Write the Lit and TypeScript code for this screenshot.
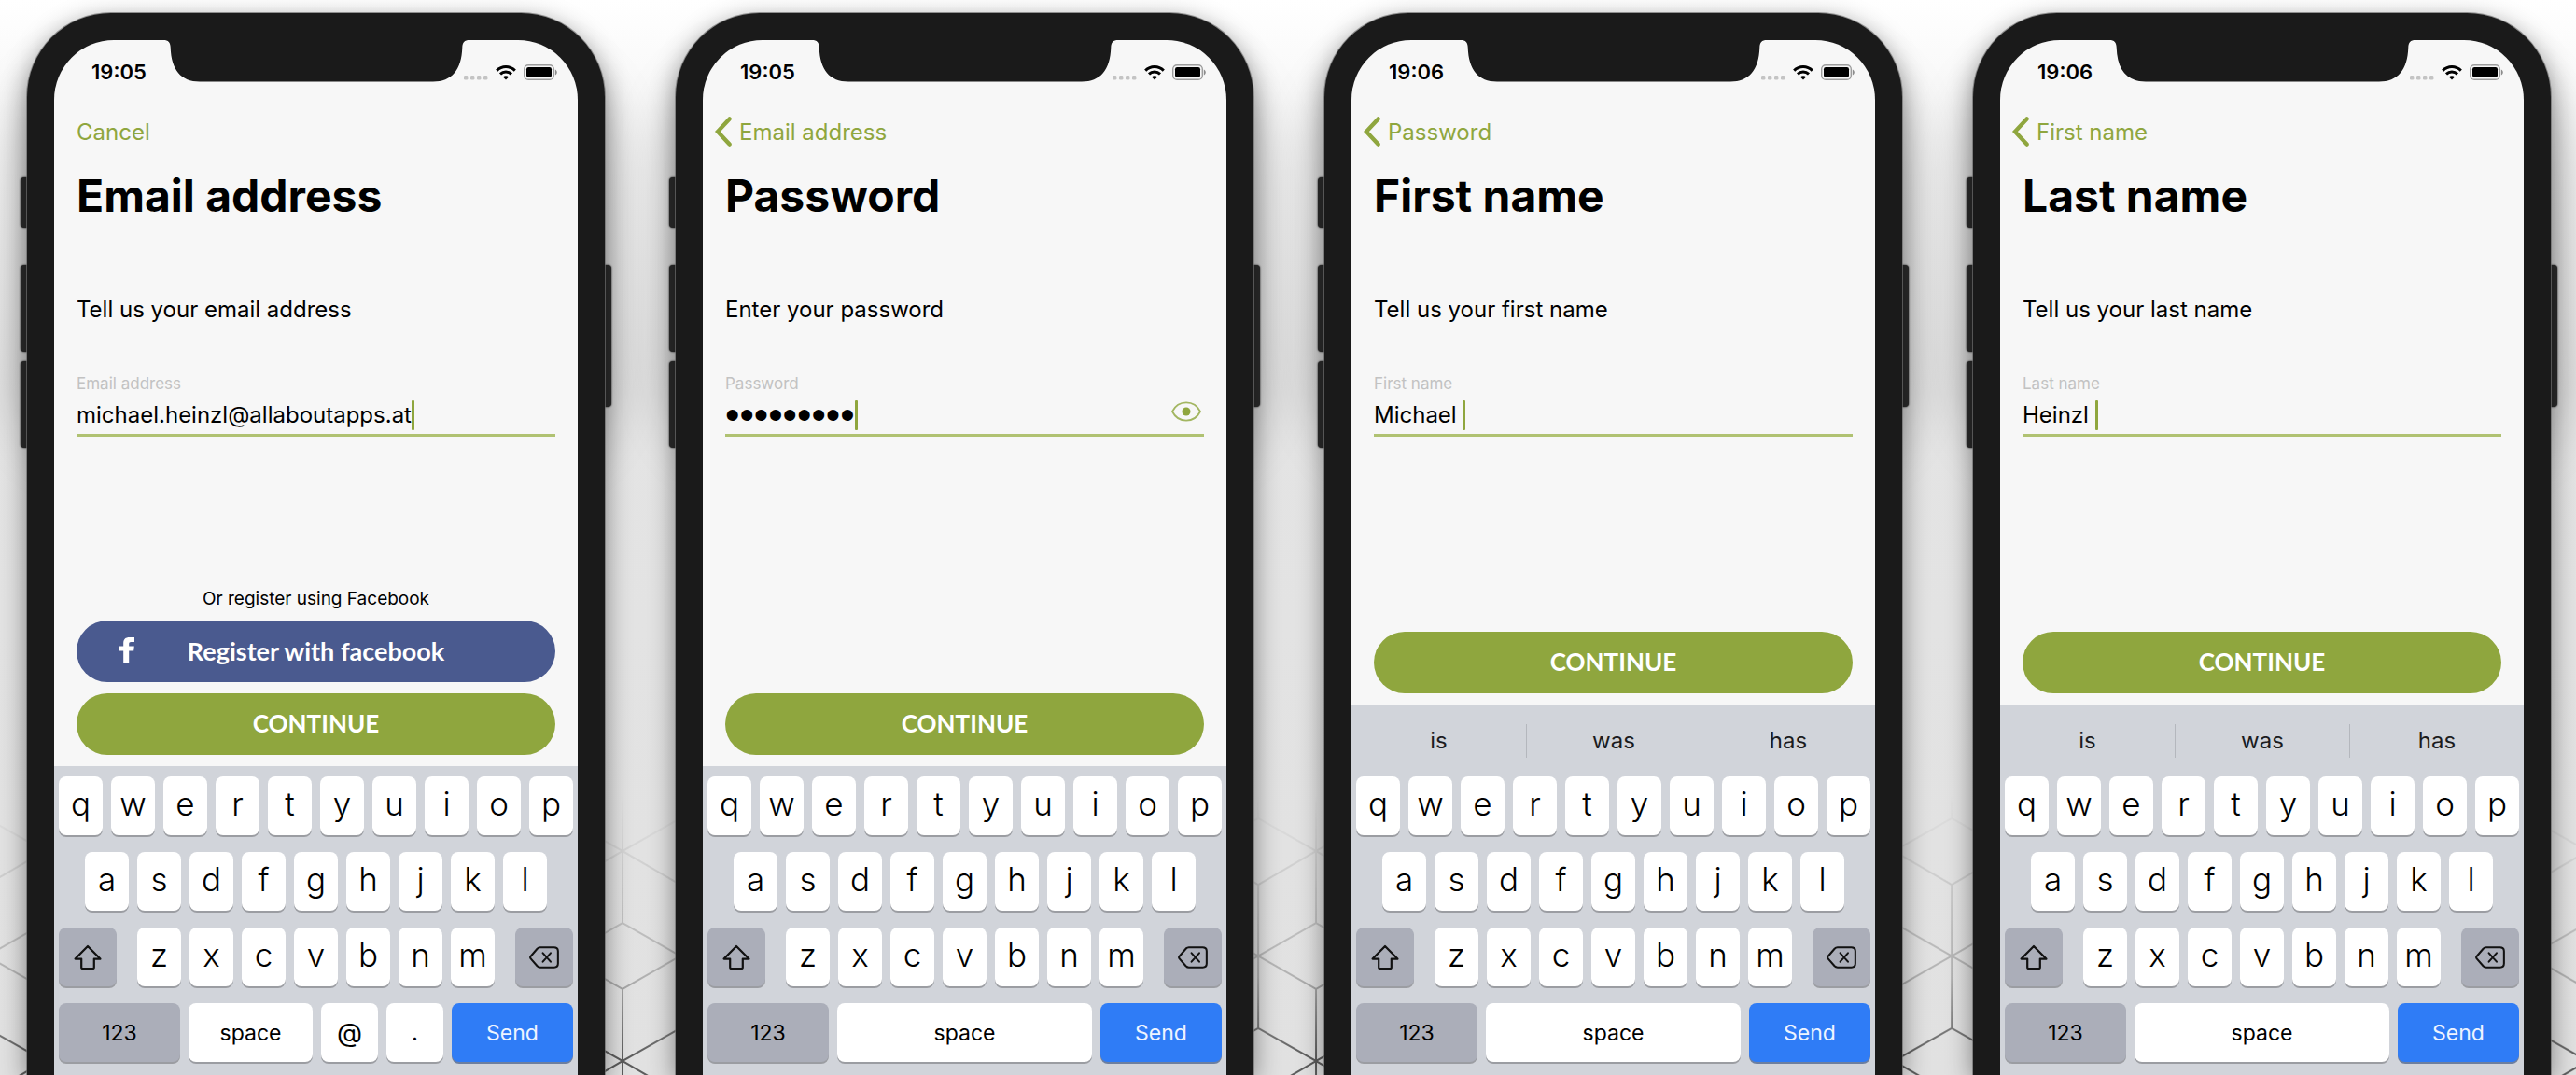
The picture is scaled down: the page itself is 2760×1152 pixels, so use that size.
import { LitElement, html, svg, css, nothing } from "lit";
import { customElement, property } from "lit/decorators.js";

interface Step {
  id: string;
  time: string;
  back: string;
  root?: boolean;
  title: string;
  prompt: string;
  label: string;
  type: string;
  value: string;
  facebook?: boolean;
  suggestions?: string[];
  extraKeys?: string[];
}

const steps: Step[] = [
  {
    id: "email",
    time: "19:05",
    back: "Cancel",
    root: true,
    title: "Email address",
    prompt: "Tell us your email address",
    label: "Email address",
    type: "text",
    value: "michael.heinzl@allaboutapps.at",
    facebook: true,
    extraKeys: ["@", "."],
  },
  {
    id: "password",
    time: "19:05",
    back: "Email address",
    title: "Password",
    prompt: "Enter your password",
    label: "Password",
    type: "password",
    value: "password1",
  },
  {
    id: "first-name",
    time: "19:06",
    back: "Password",
    title: "First name",
    prompt: "Tell us your first name",
    label: "First name",
    type: "text",
    value: "Michael ",
    suggestions: ["is", "was", "has"],
  },
  {
    id: "last-name",
    time: "19:06",
    back: "First name",
    title: "Last name",
    prompt: "Tell us your last name",
    label: "Last name",
    type: "text",
    value: "Heinzl ",
    suggestions: ["is", "was", "has"],
  },
];

const wifiIcon = html`<svg width="22" height="17" viewBox="0 0 22 17" aria-hidden="true">
  <g fill="none" stroke="#000" stroke-width="3">
    <path d="M1.2 6.6C6.8 1 15.2 1 20.8 6.6" />
    <path d="M5 10.4C8.4 7.1 13.6 7.1 17 10.4" />
  </g>
  <path d="M11 16.6 7.9 13.4C9.6 11.9 12.4 11.9 14.1 13.4Z" />
</svg>`;

const batteryIcon = html`<svg width="36" height="17" viewBox="0 0 36 17" aria-hidden="true">
  <rect x=".7" y=".7" width="31.6" height="15.6" rx="4.4" fill="none" stroke="#9c9c9c" stroke-width="1.4" />
  <rect x="3" y="3" width="27" height="11" rx="2.2" />
  <path d="M33.8 5.6C36.4 6.6 36.4 10.4 33.8 11.4Z" fill="#8c8c8c" />
</svg>`;

const signalIcon = html`<svg width="26" height="17" viewBox="0 0 26 17" aria-hidden="true">
  <g fill="#c4c4c4">
    <rect x="0" y="12" width="4.4" height="4.6" rx="1.4" />
    <rect x="7" y="12" width="4.4" height="4.6" rx="1.4" />
    <rect x="14" y="12" width="4.4" height="4.6" rx="1.4" />
    <rect x="21" y="12" width="4.4" height="4.6" rx="1.4" />
  </g>
</svg>`;

const chevronIcon = html`<svg width="18" height="32" viewBox="0 0 18 32" aria-hidden="true">
  <path d="M15.6 2.4 2.9 16 15.6 29.6" fill="none" stroke="#8fa63e" stroke-width="4.4" stroke-linecap="round" />
</svg>`;

const eyeIcon = html`<svg width="32" height="22" viewBox="0 0 32 22" aria-hidden="true">
  <path d="M1 11C4 5 9.5 1.4 16 1.4S28 5 31 11C28 17 22.500 20.6 16 20.6S4 17 1 11Z" fill="none" stroke="#a3b661" stroke-width="1.8" />
  <circle cx="16" cy="11" r="4.5" fill="#8fa63e" />
</svg>`;

const facebookIcon = html`<svg width="16" height="28" viewBox="0 0 16 28" aria-hidden="true">
  <path d="M4.200 28V14.600H0V9.500H4.200V6.300C4.200 2 6.600 0 10.600 0H16V5H12.400C10.700 5 10.200 5.700 10.200 7.100V9.500H15.800L15.200 14.600H10.200V28Z" fill="#fff" />
</svg>`;

const shiftIcon = html`<svg width="30" height="28" viewBox="0 0 30 28" aria-hidden="true">
  <path d="M15 2 28.400 15.600H21.800V24.400C21.800 25.400 21.200 26 20.200 26H9.800C8.800 26 8.200 25.400 8.200 24.400V15.600H1.600Z" fill="none" stroke="#111" stroke-width="2.200" stroke-linejoin="round" />
</svg>`;

const deleteIcon = html`<svg width="34" height="26" viewBox="0 0 36 28" aria-hidden="true">
  <g fill="none" stroke="#111" stroke-width="2.200" stroke-linejoin="round" stroke-linecap="round">
    <path d="M13.500 2.500H29.500C32.500 2.500 34 4 34 7V21C34 24 32.500 25.500 29.500 25.500H13.500C12 25.500 11 25 10 24L2.600 15.400C1.800 14.500 1.800 13.500 2.600 12.600L10 4C11 3 12 2.500 13.500 2.500Z" />
    <path d="M16.500 9 25.500 19M25.500 9 16.500 19" />
  </g>
</svg>`;

/** On-screen keyboard with an optional row of word suggestions. */
@customElement("soft-keyboard")
class SoftKeyboard extends LitElement {
  @property({ attribute: false }) suggestions: string[] = [];
  @property({ attribute: false }) extraKeys: string[] = [];

  static styles = css`
    :host {
      display: block;
      background: #d1d4da;
      padding-bottom: 14px;
    }
    button {
      font-family: inherit;
      color: #000;
      border: 0;
      margin: 0;
      padding: 0;
    }
    .suggestions {
      display: grid;
      grid-template-columns: repeat(3, 1fr);
      align-items: center;
      height: 77px;
    }
    .suggestion {
      height: 36px;
      background: none;
      font-size: 24px;
      line-height: 36px;
      color: #1c1c1e;
    }
    .suggestion + .suggestion {
      border-left: 1px solid #b4b7bd;
    }
    .rows {
      display: flex;
      flex-direction: column;
      gap: 18px;
      padding: 0 5px;
    }
    .rows.bare {
      padding-top: 11px;
    }
    .row {
      display: flex;
      gap: 9px;
    }
    .row.inset {
      padding: 0 28px;
    }
    .row.split {
      gap: 22px;
    }
    .letters {
      display: flex;
      flex: 1;
      gap: 9px;
    }
    .key {
      flex: 1 1 0;
      min-width: 0;
      height: 63px;
      display: flex;
      align-items: center;
      justify-content: center;
      padding-bottom: 5px;
      background: #fff;
      border-radius: 8px;
      box-shadow: 0 2px 0 #9b9da2;
      font-size: 35px;
      font-weight: 300;
      line-height: 40px;
    }
    .key.word {
      font-size: 23px;
      font-weight: 400;
      padding-bottom: 0;
    }
    .key.side {
      flex: 0 0 62px;
      padding-bottom: 0;
    }
    .key.small {
      flex: 0 0 61px;
      font-weight: 400;
      padding-bottom: 0;
    }
    .key.at {
      font-size: 28px;
    }
    .key.dot {
      font-size: 24px;
    }
    .key.wide {
      flex: 0 0 130px;
    }
    .key.grey {
      background: #abaeb9;
    }
    .key.send {
      background: #2f7cf6;
      color: #eef4ff;
      box-shadow: 0 2px 0 #6d7f9f;
    }
  `;

  private letters(row: string) {
    return row.split("").map((c) => html`<button class="key" type="button">${c}</button>`);
  }

  render() {
    const hasWords = this.suggestions.length > 0;
    return html`
      ${hasWords
        ? html`<div class="suggestions">
            ${this.suggestions.map((w) => html`<button class="suggestion" type="button">${w}</button>`)}
          </div>`
        : nothing}
      <div class="rows ${hasWords ? "" : "bare"}">
        <div class="row">${this.letters("qwertyuiop")}</div>
        <div class="row inset">${this.letters("asdfghjkl")}</div>
        <div class="row split">
          <button class="key side grey" type="button" aria-label="Shift">${shiftIcon}</button>
          <div class="letters">${this.letters("zxcvbnm")}</div>
          <button class="key side grey" type="button" aria-label="Delete">${deleteIcon}</button>
        </div>
        <div class="row">
          <button class="key word wide grey" type="button">123</button>
          <button class="key word" type="button">space</button>
          ${this.extraKeys.map(
            (k) => html`<button class="key small ${k === "@" ? "at" : "dot"}" type="button">${k}</button>`
          )}
          <button class="key word wide send" type="button">Send</button>
        </div>
      </div>
    `;
  }
}

/** One handset showing a single registration step. */
@customElement("phone-frame")
class PhoneFrame extends LitElement {
  @property({ attribute: false }) step!: Step;

  static styles = css`
    :host {
      display: flex;
      position: relative;
    }
    .glow {
      position: absolute;
      inset: 60px 0 auto 0;
      height: 420px;
      border-radius: 90px;
      box-shadow: 0 0 60px 6px rgba(0, 0, 0, 0.22);
    }
    .button {
      position: absolute;
      width: 12px;
      background: #2b2b2b;
      border-radius: 4px;
      box-shadow: 0 0 2px #000;
    }
    .left {
      left: -7px;
    }
    .mute {
      top: 176px;
      height: 54px;
    }
    .up {
      top: 270px;
      height: 93px;
    }
    .down {
      top: 373px;
      height: 93px;
    }
    .power {
      right: -7px;
      top: 270px;
      height: 152px;
    }
    .body {
      position: relative;
      flex: 1;
      display: flex;
      min-width: 0;
      padding: 29px 29px 0;
      background: #1a1a1a;
      border-radius: 90px 90px 0 0;
      box-shadow: 0 0 0 1px rgba(110, 110, 110, 0.7), 0 8px 28px rgba(0, 0, 0, 0.45);
    }
    .screen {
      position: relative;
      flex: 1;
      min-width: 0;
      display: flex;
      flex-direction: column;
      background: #f7f7f7;
      border-radius: 64px 64px 0 0;
      overflow: hidden;
    }
    .notch {
      position: absolute;
      top: -1px;
      left: 50%;
      margin-left: -164px;
    }
    .status {
      display: flex;
      align-items: center;
      gap: 8px;
      padding: 20px 22px 0 40px;
      line-height: 28px;
      font-size: 22px;
      font-weight: 600;
    }
    .time {
      margin-right: auto;
    }
    nav {
      display: flex;
      margin-top: 25px;
      padding: 0 13px;
    }
    nav.root {
      padding: 0 24px;
    }
    .back {
      display: flex;
      align-items: center;
      gap: 8px;
      height: 50px;
      color: #8fa63e;
      font-size: 24px;
      text-decoration: none;
    }
    form {
      flex: 1;
      display: flex;
      flex-direction: column;
      padding: 0 24px 12px;
    }
    h1 {
      margin: 14px 0 0;
      font-size: 48px;
      line-height: 60px;
      font-weight: 700;
    }
    .prompt {
      margin: 76px 0 0;
      font-size: 24px;
      line-height: 32px;
    }
    label {
      margin-top: 51px;
      font-size: 17px;
      line-height: 24px;
      color: #c2c2c2;
    }
    .field {
      display: flex;
      align-items: center;
      margin-top: 4px;
      padding-bottom: 2px;
      border-bottom: 3px solid #b0c272;
    }
    input {
      field-sizing: content;
      border: 0;
      outline: 0;
      margin: 0;
      padding: 0;
      height: 36px;
      background: none;
      color: #000;
      font-family: inherit;
      font-size: 24px;
      line-height: 36px;
    }
    input[type="password"] {
      font-family: "Liberation Sans", sans-serif;
      font-size: 44px;
    }
    .caret {
      width: 3px;
      height: 32px;
      border-radius: 1px;
      background: #8fa63e;
    }
    .reveal {
      display: flex;
      margin-left: auto;
      border: 0;
      padding: 0 3px 8px;
      background: none;
    }
    .actions {
      display: flex;
      flex-direction: column;
      gap: 12px;
      margin-top: auto;
    }
    .or {
      margin: 0 0 -3px;
      text-align: center;
      font-size: 19px;
      line-height: 28px;
    }
    .action {
      position: relative;
      display: flex;
      align-items: center;
      justify-content: center;
      height: 66px;
      border: 0;
      border-radius: 33px;
      padding: 0 0 2px;
      background: #8fa63e;
      color: #fff;
      font-family: Lato, "Liberation Sans", sans-serif;
      font-size: 26px;
      font-weight: 700;
    }
    .action.facebook {
      background: #4a5a8f;
      font-size: 27px;
    }
    .action.facebook svg {
      position: absolute;
      left: 46px;
    }
  `;

  render() {
    const s = this.step;
    return html`
      <div class="glow"></div>
      <span class="button left mute"></span>
      <span class="button left up"></span>
      <span class="button left down"></span>
      <span class="button power"></span>
      <div class="body">
        <div class="screen">
          <svg class="notch" width="328" height="46" viewBox="0 0 328 46" aria-hidden="true">
            <path
              d="M0 0H328V1C322.500 1 320.500 3.500 320.300 9C319.500 33 309 45.500 289 45.500H39C19 45.500 8.500 33 7.700 9C7.500 3.500 5.500 1 0 1Z"
              fill="#1a1a1a"
            />
          </svg>
          <div class="status">
            <span class="time">${s.time}</span>
            ${signalIcon} ${wifiIcon} ${batteryIcon}
          </div>
          <nav class=${s.root ? "root" : ""}>
            <a class="back" href="#">${s.root ? nothing : chevronIcon}${s.back}</a>
          </nav>
          <form>
            <h1>${s.title}</h1>
            <p class="prompt">${s.prompt}</p>
            <label for=${s.id}>${s.label}</label>
            <div class="field">
              <input id=${s.id} type=${s.type} .value=${s.value} autocomplete="off" />
              <span class="caret"></span>
              ${s.type === "password"
                ? html`<button class="reveal" type="button" aria-label="Show password">${eyeIcon}</button>`
                : nothing}
            </div>
            <div class="actions">
              ${s.facebook
                ? html`<p class="or">Or register using Facebook</p>
                    <button class="action facebook" type="button">${facebookIcon}Register with facebook</button>`
                : nothing}
              <button class="action" type="button">CONTINUE</button>
            </div>
          </form>
          <soft-keyboard .suggestions=${s.suggestions ?? []} .extraKeys=${s.extraKeys ?? []}></soft-keyboard>
        </div>
      </div>
    `;
  }
}

@customElement("app-root")
class AppRoot extends LitElement {
  static styles = css`
    :host {
      display: block;
      position: relative;
      overflow: hidden;
      font-family: Inter, "Liberation Sans", sans-serif;
      color: #000;
      background: linear-gradient(#fff 0, #fcfcfc 40px, #e4e4e4 420px, #e1e1e1 100%);
    }
    .lattice {
      position: absolute;
      left: 0;
      bottom: 0;
      width: 100%;
      height: 352px;
    }
    .phones {
      position: relative;
      display: grid;
      grid-template-columns: repeat(4, minmax(0, 1fr));
      gap: 76px;
      min-height: 100vh;
      box-sizing: border-box;
      padding: 14px 27px 0 29px;
    }
  `;

  private lattice() {
    return svg`
      <defs>
        <pattern id="cubes" x="47.800" y="112" width="123.840" height="225" patternUnits="userSpaceOnUse">
          <path d="M0 0V77M0 148V225M123.840 0V77M123.840 148V225M61.920 36V190
            M0 0 61.920 36 123.840 0M0 225 61.920 190 123.840 225
            M0 77 123.840 148M0 148 123.840 77"
            fill="none" stroke="#222" stroke-width="2" />
        </pattern>
        <linearGradient id="fade" x1="0" y1="0" x2="0" y2="1">
          <stop offset=".15" stop-color="#fff" stop-opacity="0" />
          <stop offset=".32" stop-color="#fff" stop-opacity=".07" />
          <stop offset=".7" stop-color="#fff" stop-opacity=".25" />
          <stop offset=".95" stop-color="#fff" stop-opacity=".7" />
        </linearGradient>
        <mask id="fade-mask" style="mask-type: alpha"><rect width="100%" height="100%" fill="url(#fade)" /></mask>
      </defs>
      <rect width="100%" height="100%" fill="url(#cubes)" mask="url(#fade-mask)" />
    `;
  }

  render() {
    return html`
      <svg class="lattice" aria-hidden="true">${this.lattice()}</svg>
      <div class="phones">
        ${steps.map((s) => html`<phone-frame .step=${s}></phone-frame>`)}
      </div>
    `;
  }
}
